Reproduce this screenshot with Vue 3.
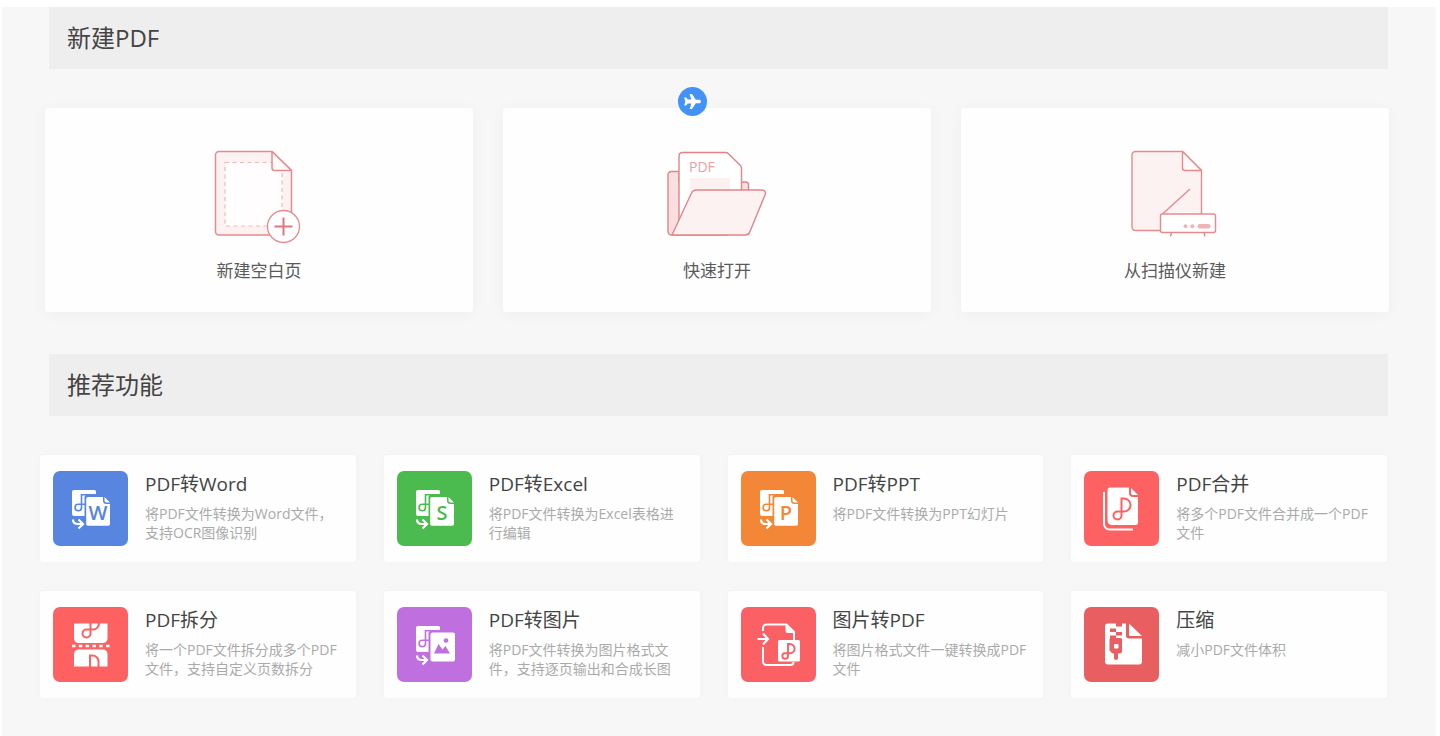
<script setup>
const features = [
  { id: 'word', title: 'PDF转Word', desc: '将PDF文件转换为Word文件，支持OCR图像识别', color: '#5785e0', letter: 'W' },
  { id: 'excel', title: 'PDF转Excel', desc: '将PDF文件转换为Excel表格进行编辑', color: '#4cbb4f', letter: 'S' },
  { id: 'ppt', title: 'PDF转PPT', desc: '将PDF文件转换为PPT幻灯片', color: '#f48638', letter: 'P' },
  { id: 'merge', title: 'PDF合并', desc: '将多个PDF文件合并成一个PDF文件', color: '#fd6162' },
  { id: 'split', title: 'PDF拆分', desc: '将一个PDF文件拆分成多个PDF文件，支持自定义页数拆分', color: '#fd6162' },
  { id: 'image', title: 'PDF转图片', desc: '将PDF文件转换为图片格式文件，支持逐页输出和合成长图', color: '#c070de' },
  { id: 'from-image', title: '图片转PDF', desc: '将图片格式文件一键转换成PDF文件', color: '#fb6064' },
  { id: 'zip', title: '压缩', desc: '减小PDF文件体积', color: '#e95e60' },
]
const converts = ['word', 'excel', 'ppt', 'image']
</script>

<template>
  <main class="panel">
    <h2 class="bar">新建PDF</h2>
    <section class="create">
      <button type="button" class="create-card">
        <svg class="art" viewBox="0 0 100 96" aria-hidden="true">
          <path d="M10 3.500H63L82.500 22.500V87H10a3.500 3.500 0 0 1-3.500-3.500V7A3.500 3.500 0 0 1 10 3.500Z" fill="#fdf2f2" stroke="#e58a8e" stroke-width="1.500" />
          <rect x="16" y="14.500" width="57" height="63.500" fill="#fffdfd" stroke="#efb9bb" stroke-width="1.200" stroke-dasharray="4 3.500" />
          <path d="M63 3.500V20a2.500 2.500 0 0 0 2.500 2.500H82.500Z" fill="#fffafa" stroke="#e58a8e" stroke-width="1.500" stroke-linejoin="round" />
          <circle cx="74.500" cy="78.500" r="16" fill="#fff" stroke="#e58a8e" stroke-width="1.300" />
          <path d="M65.500 78.500H83.500M74.500 69.500V87.500" stroke="#e0767b" stroke-width="2" />
        </svg>
        <span>新建空白页</span>
      </button>
      <button type="button" class="create-card">
        <span class="plane">
          <svg viewBox="0 0 29 29" aria-hidden="true">
            <path d="M23 14.500c0 1.200-1 1.800-2.200 1.800H17.800L14 22H11.600L13.300 16.500H9.800L8.200 18.500H6.200L7.200 14.500L6.200 10.500H8.200L9.800 12.500H13.300L11.600 7H14L17.800 12.700H20.800c1.200 0 2.200.6 2.200 1.800Z" fill="#fff" />
          </svg>
        </span>
        <svg class="art" viewBox="0 0 100 96" aria-hidden="true">
          <g stroke="#e38489" stroke-width="1.400" stroke-linejoin="round">
            <path d="M5 87A3.500 3.500 0 0 1 1 83.500V26.500A3.500 3.500 0 0 1 4.500 23.500H12V34H79a2.500 2.500 0 0 1 2.500 2.500V46L60 87Z" fill="#fadfe0" />
            <path d="M12 70V7.500A3.500 3.500 0 0 1 15.500 4.500H58.500a4 4 0 0 1 3 1.200L73 17a5 5 0 0 1 1.500 3.500V60L12 75Z" fill="#fff" />
          </g>
          <path d="M23 30H63V42H23Z" fill="#fcf0f1" />
          <text x="22" y="24" class="pdf">PDF</text>
          <path d="M29 42H94.500c3.500 0 4.800 2.400 3.500 5L83 83.500A5 5 0 0 1 78.500 87H5L24.500 45a5 5 0 0 1 4.500-3Z" fill="#fdf2f2" stroke="#e38489" stroke-width="1.400" stroke-linejoin="round" />
        </svg>
        <span>快速打开</span>
      </button>
      <button type="button" class="create-card">
        <svg class="art" viewBox="0 0 100 96" aria-hidden="true">
          <g stroke="#e58a8e" stroke-width="1.400" stroke-linejoin="round">
            <path d="M10.500 3.500H57.500L76.500 22.500V82.500H10.500A3.500 3.500 0 0 1 7 79V7A3.500 3.500 0 0 1 10.500 3.500Z" fill="#fdf2f2" stroke="none" />
            <path d="M76.500 66V22.500L57.500 3.500H10.500A3.500 3.500 0 0 0 7 7V79A3.500 3.500 0 0 0 10.500 82.500H36" fill="none" />
            <path d="M57.500 3.500V20a2.500 2.500 0 0 0 2.500 2.500H76.500Z" fill="#fffafa" />
            <path d="M37.500 66L65 41" />
            <rect x="35.500" y="66" width="55" height="18.500" rx="2" fill="#fff" />
            <path d="M46.500 84.500L45.500 88.500M79 84.500L80 88.500" />
          </g>
          <g fill="#f1b3b6">
            <circle cx="60.500" cy="78.300" r="2" />
            <circle cx="67.300" cy="78.300" r="2" />
            <rect x="72.500" y="76" width="13" height="4.500" rx="2.200" />
          </g>
        </svg>
        <span>从扫描仪新建</span>
      </button>
    </section>

    <h2 class="bar">推荐功能</h2>
    <section class="features">
      <button v-for="f in features" :key="f.id" type="button" class="feature">
        <svg class="tile" viewBox="0 0 75 75" :style="{ color: f.color }" aria-hidden="true">
          <rect width="75" height="75" rx="7" fill="currentColor" />

          <g v-if="converts.includes(f.id)">
            <path d="M21 19H41.500a1.500 1.500 0 0 1 1.500 1.500V26H34V45H21a2 2 0 0 1-2-2V21a2 2 0 0 1 2-2Z" fill="#fff" />
            <path d="M43 23.800H28.500V36.500a3.200 3.200 0 1 1-3.200-3.200H32" fill="none" stroke="currentColor" stroke-width="1.600" />
            <rect x="31.500" y="24" width="28" height="32" rx="2" fill="currentColor" />
            <path d="M20 48.500c0 3.500 2 4.500 5 4.500h3.500M25.500 48.500l4.500 4.500-4.500 4.500" fill="none" stroke="#fff" stroke-width="2.200" />
            <template v-if="f.letter">
              <path d="M35 26H50V29.500a3.500 3.500 0 0 0 3.500 3.500H57V53a1.800 1.800 0 0 1-1.800 1.800H35A1.800 1.800 0 0 1 33.200 53V27.800A1.800 1.800 0 0 1 35 26Z" fill="#fff" />
              <path d="M51.500 26L57 31.500H53.500a2 2 0 0 1-2-2Z" fill="#fff" />
              <text x="45" y="49" class="letter" fill="currentColor">{{ f.letter }}</text>
            </template>
            <template v-else>
              <rect x="33.500" y="25.500" width="24.500" height="29" rx="2" fill="#fff" />
              <path d="M37 46.500L41.500 37l4 5.500 3-3.500 4.500 7.500Z" fill="currentColor" />
              <circle cx="49" cy="33.500" r="2.300" fill="currentColor" />
            </template>
          </g>

          <g v-else-if="f.id === 'merge'" fill="none">
            <path d="M20 21V53a5.500 5.500 0 0 0 5.500 5.500H49" stroke="#fff" stroke-width="2" />
            <path d="M26 16.500H45V22a4 4 0 0 0 4 4H54V51.500A2.500 2.500 0 0 1 51.500 54H28a4.500 4.500 0 0 1-4.500-4.500V19A2.500 2.500 0 0 1 26 16.500Z" fill="#fff" />
            <path d="M47 17L54 24H49a2 2 0 0 1-2-2Z" fill="#fff" />
            <path d="M37.500 45V27.500H40a6.500 6.500 0 0 1 0 13H33.500a4 4 0 1 0 4 4" stroke="currentColor" stroke-width="2" />
          </g>

          <g v-else-if="f.id === 'split'" fill="none">
            <path d="M21 16.500H54.500V31.500a4.500 4.500 0 0 1-4.500 4.500H25.500A4.500 4.500 0 0 1 21 31.500Z" fill="#fff" />
            <path d="M37.500 16V26.500a4 4 0 1 1-4-4H40a6 6 0 0 0 6-6.500" stroke="currentColor" stroke-width="2" />
            <path d="M19 39H57" stroke="#fff" stroke-width="2.400" stroke-dasharray="3.500 3.300" />
            <path d="M25.500 42.500H50a4.500 4.500 0 0 1 4.500 4.500V59.500H21V47a4.500 4.500 0 0 1 4.500-4.500Z" fill="#fff" />
            <path d="M37 60V48.500H39.500a6 6 0 0 1 6 6V60" stroke="currentColor" stroke-width="2" />
          </g>

          <g v-else-if="f.id === 'from-image'" fill="none">
            <path d="M22 24V21a3.500 3.500 0 0 1 3.500-3.500H45.500L53 25V33M22 40V54.500A3.500 3.500 0 0 0 25.500 58H49.500a3 3 0 0 0 3-3" stroke="#fff" stroke-width="2" />
            <path d="M44.500 17.500L53.500 26H46.500a2 2 0 0 1-2-2Z" fill="#fff" />
            <path d="M16.500 32H26.500M22 26.500L27 32L22 37.500" stroke="#fff" stroke-width="2.200" />
            <rect x="37" y="33" width="22" height="21.500" rx="1.500" fill="#fff" />
            <path d="M47 49V37H49a4.600 4.600 0 0 1 0 9.200H44a2.800 2.800 0 1 0 3 2.800" stroke="currentColor" stroke-width="1.900" />
          </g>

          <g v-else>
            <path d="M24 16.500H42V28.500a3 3 0 0 0 3 3H58V54.500a3 3 0 0 1-3 3H24a3 3 0 0 1-3-3V19.500A3 3 0 0 1 24 16.500Z" fill="#fff" />
            <path d="M45 16.500L58 29H46.500a1.500 1.500 0 0 1-1.500-1.500Z" fill="#fff" />
            <path d="M32 16H38V19.500H32ZM26 21.500H32V25H26ZM32 25H38V28.500H32ZM26 28.500H32V32H26Z" fill="currentColor" />
            <path d="M27 31H36.500a1.500 1.500 0 0 1 1.500 1.500V44a2.500 2.500 0 0 1-2.500 2.500H34V51a2 2 0 0 1-4 0V46.500H28.500L25.500 43.500V32.500A1.500 1.500 0 0 1 27 31Z" fill="currentColor" />
            <rect x="30" y="37" width="4.500" height="4.500" rx="1" fill="#fff" />
          </g>
        </svg>
        <span class="info">
          <span class="title">{{ f.title }}</span>
          <span class="desc">{{ f.desc }}</span>
        </span>
      </button>
    </section>
  </main>
</template>

<style>
body {
  background: #fff;
}
</style>

<style scoped>
.panel {
  box-sizing: border-box;
  min-height: calc(100vh - 7px);
  margin: 7px 4px 0 2px;
  background: #f7f7f7;
  font-family: "Open Sans", "Noto Sans CJK SC", sans-serif;
  display: flow-root;
}
button {
  border: 0;
  padding: 0;
  margin: 0;
  font: inherit;
  text-align: left;
  cursor: pointer;
}
.bar {
  margin: 0 48px 0 47px;
  padding: 0 18px;
  line-height: 62px;
  background: #eee;
  color: #444;
  font-size: 24px;
  font-weight: 400;
}
.create {
  display: grid;
  grid-template-columns: repeat(3, 1fr);
  gap: 30px;
  margin: 39px 47px 42px 43px;
}
.create-card {
  position: relative;
  display: flex;
  flex-direction: column;
  align-items: center;
  gap: 15px;
  padding: 40px 0 29px;
  border-radius: 3px;
  background: #fefefe;
  box-shadow: 0 2px 16px rgba(0, 0, 0, 0.04);
  color: #5a5a5a;
  font-size: 17px;
  line-height: 24px;
}
.art {
  width: 100px;
  height: 96px;
}
.pdf {
  font-size: 14px;
  fill: #e9a0a4;
}
.plane {
  position: absolute;
  top: -21px;
  left: 41%;
  width: 29px;
  height: 29px;
  border-radius: 50%;
  background: #4292f8;
}
.plane svg {
  display: block;
}
.features {
  display: grid;
  grid-template-columns: repeat(4, 1fr);
  gap: 29px 28px;
  margin: 39px 49px 38px 38px;
}
.feature {
  display: flex;
  align-items: flex-start;
  gap: 17px;
  min-height: 107px;
  padding: 16px 13px;
  border-radius: 3px;
  background: #fefefe;
  box-shadow: 0 0 8px rgba(0, 0, 0, 0.02);
}
.tile {
  flex: none;
  width: 75px;
  height: 75px;
}
.letter {
  font-size: 20px;
  font-weight: 600;
  text-anchor: middle;
}
.info {
  flex: 1;
  min-width: 0;
}
.title,
.desc {
  display: block;
}
.title {
  color: #444;
  font-size: 19px;
  line-height: 26px;
}
.desc {
  margin-top: 7px;
  color: #aaa;
  font-size: 14px;
  line-height: 19px;
}
</style>
